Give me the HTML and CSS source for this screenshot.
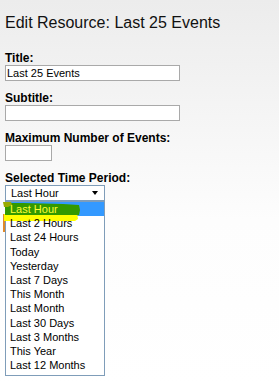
FILE: index.html
```html
<!DOCTYPE html>
<html lang="en">
<head>
<meta charset="UTF-8" />
<title>Edit Resource</title>
<link rel="stylesheet" href="styles.css">
</head>
<body>
<h1>Edit Resource: Last 25 Events</h1>

<div class="field">
  <label>Title:</label>
  <input type="text" class="wide" value="Last 25 Events" />
</div>

<div class="field">
  <label>Subtitle:</label>
  <input type="text" class="wide" value="" />
</div>

<div class="field">
  <label>Maximum Number of Events:</label>
  <input type="text" class="small" value="" />
</div>

<div class="field">
  <label>Selected Time Period:</label>
  <div class="select">
    <span>Last Hour</span>
    <span class="arrow"></span>
  </div>
  <div class="options">
    <!-- marker scribbles drawn over the screenshot -->
    <svg class="marks" width="84" height="34" viewBox="0 0 84 34">
      <path d="M0 12 L2 12 L2 30 L0 30 Z" fill="#e0892a" />
      <path d="M1 12 L74 11 L75 17 L72 19 L1 19 Z" fill="#ffff00" />
      <path d="M2 0 L9 1 L20 1 L60 2 L76 3 L77 8 L76 13 L2 13 Z" fill="#339900" />
      <path d="M0 0 L8 0 L9 3 L5 5 L1 5 Z" fill="#99aa00" />
    </svg>
    <div class="opt sel"><span>Last Hour</span></div>
    <div class="opt"><span>Last 2 Hours</span></div>
    <div class="opt"><span>Last 24 Hours</span></div>
    <div class="opt"><span>Today</span></div>
    <div class="opt"><span>Yesterday</span></div>
    <div class="opt"><span>Last 7 Days</span></div>
    <div class="opt"><span>This Month</span></div>
    <div class="opt"><span>Last Month</span></div>
    <div class="opt"><span>Last 30 Days</span></div>
    <div class="opt"><span>Last 3 Months</span></div>
    <div class="opt"><span>This Year</span></div>
    <div class="opt"><span>Last 12 Months</span></div>
  </div>
</div>
</body>
</html>
```

FILE: styles.css
```css
html { background: #fff; }
body {
  margin: 0; padding: 0 5px;
  min-height: 384px;
  background: linear-gradient(#ececec, #fdfdfd 220px, #fff);
  font-family: "Liberation Sans", Arial, sans-serif;
  color: #000;
}

h1 {
  font-size: 16px; font-weight: normal; line-height: 18px;
  margin: 14px 0 19px;
  color: #111;
}

.field { margin-bottom: 10px; }
.field label {
  display: block;
  font-weight: bold; font-size: 12px; line-height: 14px;
}

input[type=text] {
  display: block; box-sizing: border-box;
  height: 16px; margin: 0; padding: 0 1px;
  border: 1px solid #a9a9a9; background: #fff;
  font-family: inherit; font-size: 11px; color: #000;
}
input.wide { width: 175px; }
input.small { width: 47px; }

.select {
  box-sizing: border-box;
  width: 100px; height: 16px;
  border: 1px solid #7f9db9; background: #fff;
  display: flex; align-items: center; justify-content: space-between;
  padding: 0 6px 0 5px;
  font-size: 11px;
}
.arrow {
  width: 0; height: 0;
  border-left: 3px solid transparent;
  border-right: 3px solid transparent;
  border-top: 4px solid #000;
}

.options {
  position: relative;
  box-sizing: border-box;
  width: 100px;
  border: 1px solid #7f9db9; background: #fff;
  padding: 0 0 3px;
  font-size: 11px;
}
.opt {
  height: 14.2px; line-height: 14px;
  padding-left: 4px;
}
.opt span { position: relative; z-index: 2; }
.opt.sel { background: #3399ff; color: #ffff33; }
.marks {
  position: absolute; left: -3px; top: 0;
  z-index: 1;
}
```
